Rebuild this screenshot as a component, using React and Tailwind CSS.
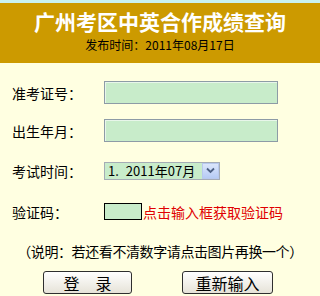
import React from "react";

const cjk = { fontFamily: '"Noto Sans CJK SC", "Liberation Sans", sans-serif' };

function Field({ label, children, className = "" }) {
  return (
    <div className={"flex items-center h-[23px] " + className}>
      <div className="w-[104px] shrink-0 pl-[12px] text-[14px] leading-none text-black">{label}</div>
      {children}
    </div>
  );
}

export default function App() {
  return (
    <div className="w-[320px] h-[296px] bg-[#ffffe1] overflow-hidden flex flex-col" style={cjk}>
      <div className="h-[3px] bg-[#c9f2f0]" />
      <div className="h-[60px] bg-[#cc9a00] flex flex-col items-center">
        <div className="mt-[5px] text-[21px] leading-[26px] font-bold text-white">
          广州考区中英合作成绩查询
        </div>
        <div className="mt-[3px] text-[12px] leading-[16px] text-black">
          发布时间：2011年08月17日
        </div>
      </div>

      <Field label="准考证号：" className="mt-[18px]">
        <div className="w-[174px] h-[23px] bg-[#c8ecca] border border-[#8d9ba6] shadow-[inset_1px_1px_0_#e8f6ea]" />
      </Field>

      <Field label="出生年月：" className="mt-[15px]">
        <div className="w-[174px] h-[23px] bg-[#c8ecca] border border-[#8d9ba6] shadow-[inset_1px_1px_0_#e8f6ea]" />
      </Field>

      <Field label="考试时间：" className="mt-[17px] h-[18px]">
        <div className="w-[116px] h-[18px] bg-[#c8ecca] border border-[#a5acb5] flex items-center">
          <div className="flex-1 flex items-center pl-[3px] text-[13px] leading-none text-black whitespace-nowrap">
            <span>1.</span>
            <span className="ml-[7px]">2011年07月</span>
          </div>
          <div className="shrink-0 w-[17px] h-[16px] bg-gradient-to-b from-[#dbe6fb] to-[#b6cbf5] border border-[#b8c9ee] flex items-center justify-center">
            <svg width="9" height="7" viewBox="0 0 9 7">
              <path d="M1 1.5 L4.5 5 L8 1.5" fill="none" stroke="#4d6185" strokeWidth="1.8" />
            </svg>
          </div>
        </div>
      </Field>

      <Field label="验证码：" className="mt-[18px] h-[17px]">
        <div className="w-[38px] h-[17px] bg-[#c8ecca] border border-black" />
        <div className="ml-[1px] text-[14px] leading-none text-[#e00000]">点击输入框获取验证码</div>
      </Field>

      <div className="mt-[20px] text-center text-[14px] leading-[16px] text-black tracking-[-0.4px]">
        （说明：若还看不清数字请点击图片再换一个）
      </div>

      <div className="mt-[12px] flex">
        <button className="ml-[43px] w-[89px] h-[23px] rounded-[3px] border border-[#2f2f2f] bg-gradient-to-b from-[#ffffff] to-[#e6e3d8] text-[16px] leading-none text-black whitespace-pre" style={cjk}>
          登　录
        </button>
        <button className="ml-[50px] w-[91px] h-[23px] rounded-[3px] border border-[#2f2f2f] bg-gradient-to-b from-[#ffffff] to-[#e6e3d8] text-[16px] leading-none text-black" style={cjk}>
          重新输入
        </button>
      </div>
    </div>
  );
}
